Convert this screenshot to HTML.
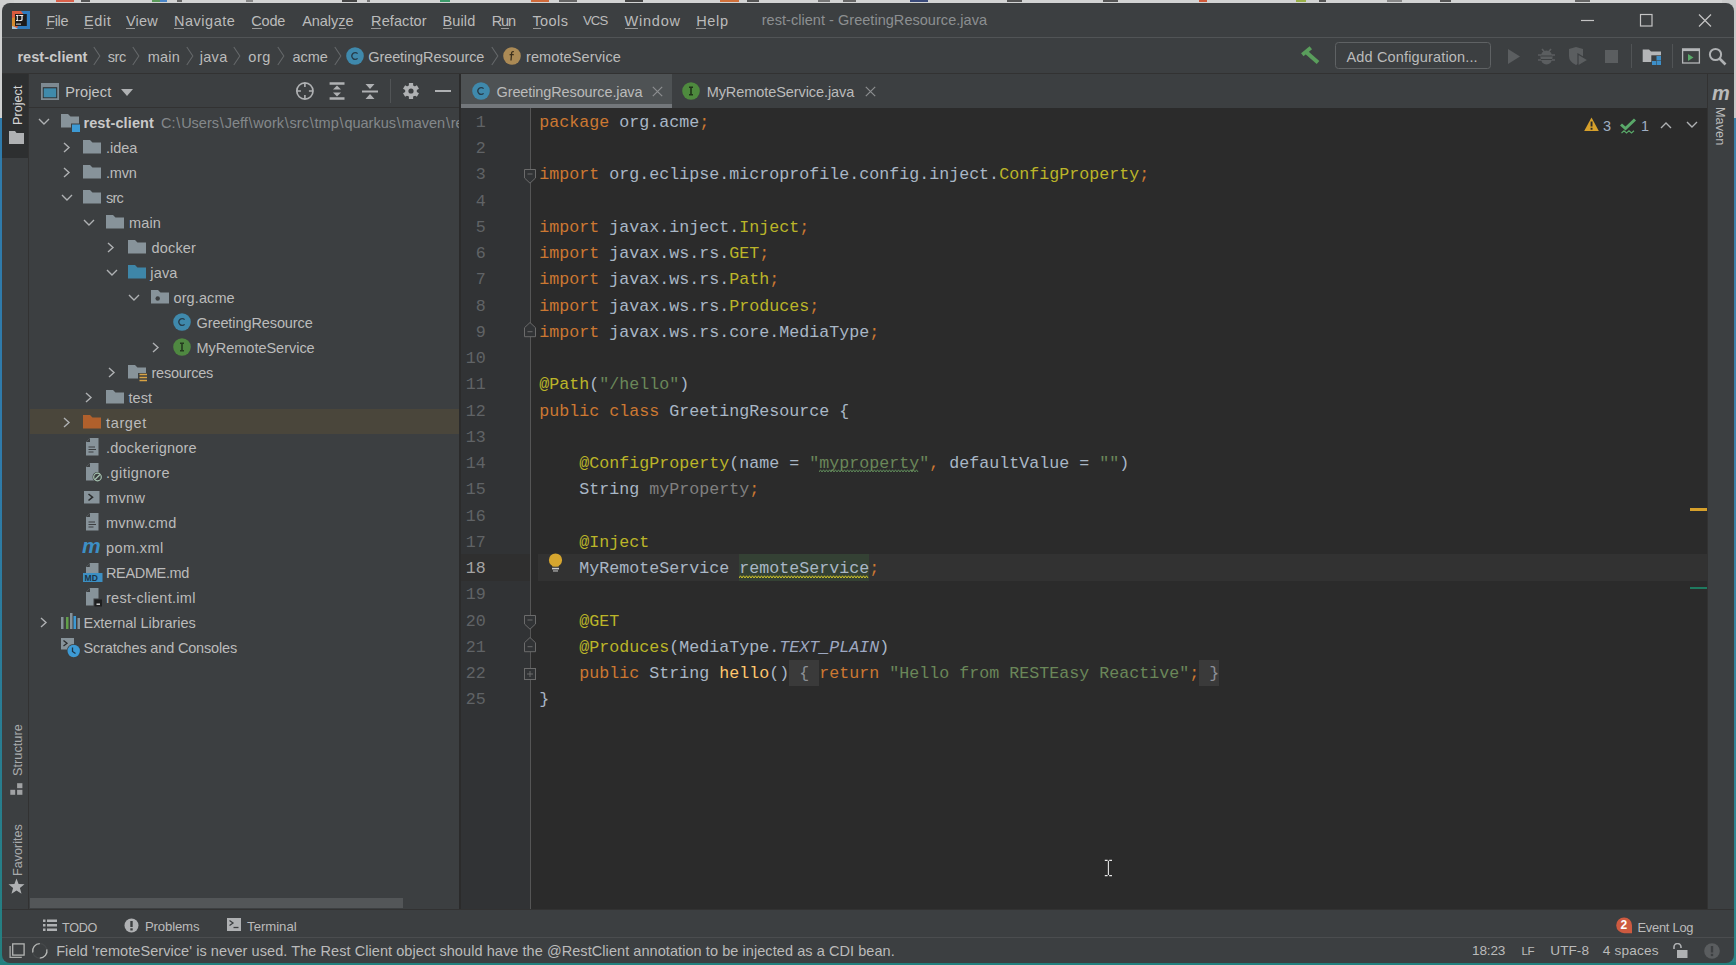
<!DOCTYPE html>
<html><head><meta charset="utf-8">
<style>
*{margin:0;padding:0;box-sizing:border-box}
html,body{width:1736px;height:965px;overflow:hidden;background:#2c7f88}
body{position:relative;font-family:"Liberation Sans",sans-serif;color:#bbbbbb}
.t{position:absolute;white-space:pre}
.r{position:absolute;display:block}
.u{text-decoration:underline;text-underline-offset:2px}
</style></head><body>
<div class="r" style="left:0px;top:0px;width:1736px;height:3px;background:#d2d3d3;"></div><div class="r" style="left:0px;top:0px;width:3px;height:118px;background:#cfd0d0;"></div><div class="r" style="left:0px;top:118px;width:3px;height:847px;background:#2f7bab;background:linear-gradient(#2f7bab,#2f7bab 40%,#24807f);"></div><div class="r" style="left:1733px;top:0px;width:3px;height:118px;background:#c9caca;"></div><div class="r" style="left:1733px;top:118px;width:3px;height:847px;background:#3d80a8;background:linear-gradient(#3d80a8,#3d80a8 40%,#2b8587);"></div><div class="r" style="left:0px;top:962px;width:1736px;height:3px;background:#22807e;"></div><div class="r" style="left:56px;top:0px;width:18px;height:2px;background:#d9604a;"></div><div class="r" style="left:81px;top:0px;width:9px;height:2px;background:#555555;"></div><div class="r" style="left:152px;top:0px;width:8px;height:2px;background:#5a9a5a;"></div><div class="r" style="left:160px;top:0px;width:7px;height:2px;background:#4a86c8;"></div><div class="r" style="left:177px;top:0px;width:5px;height:2px;background:#666666;"></div><div class="r" style="left:246px;top:0px;width:7px;height:2px;background:#888888;"></div><div class="r" style="left:342px;top:0px;width:15px;height:2px;background:#444444;"></div><div class="r" style="left:367px;top:0px;width:3px;height:2px;background:#777777;"></div><div class="r" style="left:440px;top:0px;width:10px;height:2px;background:#3c9a6a;"></div><div class="r" style="left:531px;top:0px;width:18px;height:2px;background:#d06a3a;"></div><div class="r" style="left:559px;top:0px;width:18px;height:2px;background:#666666;"></div><div class="r" style="left:625px;top:0px;width:18px;height:2px;background:#444444;"></div><div class="r" style="left:720px;top:0px;width:19px;height:2px;background:#d0703a;"></div><div class="r" style="left:747px;top:0px;width:12px;height:2px;background:#555555;"></div><div class="r" style="left:818px;top:0px;width:12px;height:2px;background:#777777;"></div><div class="r" style="left:843px;top:0px;width:13px;height:2px;background:#666666;"></div><div class="r" style="left:910px;top:0px;width:18px;height:2px;background:#3a4a7a;"></div><div class="r" style="left:1007px;top:0px;width:15px;height:2px;background:#555555;"></div><div class="r" style="left:1103px;top:0px;width:15px;height:2px;background:#555555;"></div><div class="r" style="left:1199px;top:0px;width:8px;height:2px;background:#d05a3a;"></div><div class="r" style="left:1296px;top:0px;width:10px;height:2px;background:#9ab04a;"></div><div class="r" style="left:1319px;top:0px;width:7px;height:2px;background:#555555;"></div><div class="r" style="left:1387px;top:0px;width:15px;height:2px;background:#888888;"></div><div class="r" style="left:1440px;top:0px;width:11px;height:2px;background:#555555;"></div><div class="r" style="left:1575px;top:0px;width:15px;height:2px;background:#666666;"></div><div class="r" style="left:0px;top:0px;width:14px;height:16px;background:#cfd0d0;"></div><div class="r" style="left:1722px;top:0px;width:14px;height:16px;background:#c9caca;"></div><div class="r" style="left:2px;top:3px;width:1732px;height:960px;background:#3c3f41;border-radius:8px;"></div><div class="r" style="left:2px;top:37px;width:1732px;height:1px;background:#515456;"></div><div class="r" style="left:2px;top:73px;width:1732px;height:1px;background:#323232;"></div><svg class="r" style="left:12px;top:11px;" width="18" height="18" viewBox="0 0 18 18"><rect x="0" y="0" width="18" height="18" fill="#2f7bbe"/><path d="M0 0 H9 L12 4 L5 17 L0 18 Z" fill="#da5b3e"/><path d="M0 7 L4.5 6 L4 15 L0 16 Z" fill="#d48a2e"/><path d="M0 15 L3 16 L6 18 H0 Z" fill="#a9c4d8"/><rect x="3" y="3" width="11.8" height="12" fill="#1c1b1b"/><path d="M4 4 H6.6 V4.9 H5.8 V9.1 H6.6 V10 H4 V9.1 H4.8 V4.9 H4 Z" fill="#f0f0f0"/><path d="M7.2 4 H11.2 V4.9 H10.6 V8.4 Q10.6 10 8.8 10 H7.2 V9 H8.6 Q9.4 9 9.4 8.2 V4.9 H7.2 Z" fill="#f0f0f0"/><rect x="4" y="12.4" width="5" height="1.5" fill="#9a9a9a"/></svg><div class="t" style="left:46.20px;top:10.97px;font-size:14.5px;line-height:20px;color:#bbbbbb;letter-spacing:-0.348px;">File</div><div class="r" style="left:46px;top:28px;width:8px;height:1px;background:#9a9a9a;"></div><div class="t" style="left:84.10px;top:10.97px;font-size:14.5px;line-height:20px;color:#bbbbbb;letter-spacing:0.563px;">Edit</div><div class="r" style="left:84px;top:28px;width:9px;height:1px;background:#9a9a9a;"></div><div class="t" style="left:125.90px;top:10.97px;font-size:14.5px;line-height:20px;color:#bbbbbb;letter-spacing:0.242px;">View</div><div class="r" style="left:126px;top:28px;width:9px;height:1px;background:#9a9a9a;"></div><div class="t" style="left:173.90px;top:10.97px;font-size:14.5px;line-height:20px;color:#bbbbbb;letter-spacing:0.542px;">Navigate</div><div class="r" style="left:174px;top:28px;width:10px;height:1px;background:#9a9a9a;"></div><div class="t" style="left:251.20px;top:10.97px;font-size:14.5px;line-height:20px;color:#bbbbbb;letter-spacing:-0.152px;">Code</div><div class="r" style="left:252px;top:28px;width:10px;height:1px;background:#9a9a9a;"></div><div class="t" style="left:302.20px;top:10.97px;font-size:14.5px;line-height:20px;color:#bbbbbb;letter-spacing:-0.053px;">Analyze</div><div class="r" style="left:339px;top:28px;width:7px;height:1px;background:#9a9a9a;"></div><div class="t" style="left:371.10px;top:10.97px;font-size:14.5px;line-height:20px;color:#bbbbbb;letter-spacing:0.099px;">Refactor</div><div class="r" style="left:371px;top:28px;width:10px;height:1px;background:#9a9a9a;"></div><div class="t" style="left:442.40px;top:10.97px;font-size:14.5px;line-height:20px;color:#bbbbbb;letter-spacing:0.159px;">Build</div><div class="r" style="left:443px;top:28px;width:9px;height:1px;background:#9a9a9a;"></div><div class="t" style="left:491.70px;top:10.97px;font-size:14.5px;line-height:20px;color:#bbbbbb;letter-spacing:-1.154px;">Run</div><div class="r" style="left:501px;top:28px;width:8px;height:1px;background:#9a9a9a;"></div><div class="t" style="left:532.40px;top:10.97px;font-size:14.5px;line-height:20px;color:#bbbbbb;letter-spacing:0.411px;">Tools</div><div class="r" style="left:533px;top:28px;width:8px;height:1px;background:#9a9a9a;"></div><div class="t" style="left:582.90px;top:11.42px;font-size:13.2px;line-height:20px;color:#bbbbbb;letter-spacing:-0.863px;">VCS</div><div class="t" style="left:624.40px;top:10.97px;font-size:14.5px;line-height:20px;color:#bbbbbb;letter-spacing:0.816px;">Window</div><div class="r" style="left:625px;top:28px;width:13px;height:1px;background:#9a9a9a;"></div><div class="t" style="left:696.20px;top:10.97px;font-size:14.5px;line-height:20px;color:#bbbbbb;letter-spacing:0.667px;">Help</div><div class="r" style="left:696px;top:28px;width:10px;height:1px;background:#9a9a9a;"></div><div class="t" style="left:761.70px;top:10.47px;font-size:14.5px;line-height:20px;color:#8c8f91;letter-spacing:0.038px;">rest-client - GreetingResource.java</div><svg class="r" style="left:1578px;top:12px;" width="140" height="18" viewBox="0 0 140 18"><path d="M3 8.5 H16" stroke="#c4c4c4" stroke-width="1.2"/>
<rect x="62.5" y="2.5" width="11.5" height="11.5" fill="none" stroke="#c4c4c4" stroke-width="1.2"/>
<path d="M121 2.5 L133 14.5 M133 2.5 L121 14.5" stroke="#c4c4c4" stroke-width="1.2"/></svg><div class="t" style="left:17.40px;top:46.97px;font-size:14.5px;line-height:20px;color:#c9c9c9;font-weight:bold;letter-spacing:0.069px;">rest-client</div><svg class="r" style="left:93px;top:46px;" width="8" height="20" viewBox="0 0 8 20"><path d="M0.8 1 L6.8 10 L0.8 19" stroke="#646769" stroke-width="1.1" fill="none"/></svg><svg class="r" style="left:132px;top:46px;" width="8" height="20" viewBox="0 0 8 20"><path d="M0.8 1 L6.8 10 L0.8 19" stroke="#646769" stroke-width="1.1" fill="none"/></svg><svg class="r" style="left:186px;top:46px;" width="8" height="20" viewBox="0 0 8 20"><path d="M0.8 1 L6.8 10 L0.8 19" stroke="#646769" stroke-width="1.1" fill="none"/></svg><svg class="r" style="left:233px;top:46px;" width="8" height="20" viewBox="0 0 8 20"><path d="M0.8 1 L6.8 10 L0.8 19" stroke="#646769" stroke-width="1.1" fill="none"/></svg><svg class="r" style="left:277px;top:46px;" width="8" height="20" viewBox="0 0 8 20"><path d="M0.8 1 L6.8 10 L0.8 19" stroke="#646769" stroke-width="1.1" fill="none"/></svg><svg class="r" style="left:334px;top:46px;" width="8" height="20" viewBox="0 0 8 20"><path d="M0.8 1 L6.8 10 L0.8 19" stroke="#646769" stroke-width="1.1" fill="none"/></svg><svg class="r" style="left:491px;top:46px;" width="8" height="20" viewBox="0 0 8 20"><path d="M0.8 1 L6.8 10 L0.8 19" stroke="#646769" stroke-width="1.1" fill="none"/></svg><div class="t" style="left:107.80px;top:46.97px;font-size:14.5px;line-height:20px;color:#bbbbbb;letter-spacing:-0.479px;">src</div><div class="t" style="left:147.70px;top:46.97px;font-size:14.5px;line-height:20px;color:#bbbbbb;letter-spacing:0.212px;">main</div><div class="t" style="left:199.76px;top:46.97px;font-size:14.5px;line-height:20px;color:#bbbbbb;letter-spacing:0.286px;">java</div><div class="t" style="left:248.20px;top:46.97px;font-size:14.5px;line-height:20px;color:#bbbbbb;letter-spacing:0.624px;">org</div><div class="t" style="left:292.60px;top:46.97px;font-size:14.5px;line-height:20px;color:#bbbbbb;letter-spacing:-0.118px;">acme</div><svg class="r" style="left:345px;top:46px" width="20" height="20" viewBox="0 0 20 20"><circle cx="10" cy="10" r="8.8" fill="#3f89ac"/><path d="M12.6 7.6 A3.3 3.4 0 1 0 12.6 12.4" stroke="#263c4a" stroke-width="1.35" fill="none"/></svg><div class="t" style="left:368.30px;top:46.97px;font-size:14.5px;line-height:20px;color:#bbbbbb;letter-spacing:-0.105px;">GreetingResource</div><svg class="r" style="left:502px;top:46px" width="20" height="20" viewBox="0 0 20 20"><circle cx="10" cy="10" r="8.8" fill="#ab8a55"/><path d="M11.8 5.6 Q10 5.2 9.6 7 L9 14.5 M7.6 8.6 H11.8" stroke="#3b2f1c" stroke-width="1.3" fill="none"/></svg><div class="t" style="left:526.00px;top:46.97px;font-size:14.5px;line-height:20px;color:#bbbbbb;letter-spacing:0.112px;">remoteService</div><svg class="r" style="left:1296px;top:42px;" width="26" height="24" viewBox="0 0 26 24"><path d="M6.3 12.8 L14.8 5.8" stroke="#5a9e5c" stroke-width="3.8"/><path d="M10 10 L22 20.6" stroke="#5a9e5c" stroke-width="4"/></svg><div class="r" style="left:1335px;top:42px;width:156px;height:27px;background:transparent;border:1.4px solid #5f6264;border-radius:3.5px;"></div><div class="t" style="left:1346.50px;top:47.47px;font-size:14.5px;line-height:20px;color:#bbbbbb;letter-spacing:0.154px;">Add Configuration...</div><svg class="r" style="left:1506px;top:48px;" width="16" height="17" viewBox="0 0 16 17"><path d="M2 1 L14 8.5 L2 16 Z" fill="#5b5e60"/></svg><svg class="r" style="left:1537px;top:46px;" width="19" height="20" viewBox="0 0 19 20"><ellipse cx="9.5" cy="11.5" rx="6" ry="7" fill="#5b5e60"/><path d="M5 3 L7.5 6 M14 3 L11.5 6 M1 9 H4 M15 9 H18 M1 14 H4 M15 14 H18" stroke="#5b5e60" stroke-width="1.6"/><path d="M4 10 H15 M4 13.5 H15" stroke="#3c3f41" stroke-width="1.2"/></svg><svg class="r" style="left:1567px;top:46px;" width="23" height="21" viewBox="0 0 23 21"><path d="M2 3 L9 1 L16 3 V10 Q16 16 9 19 Q2 16 2 10 Z" fill="#5b5e60"/><path d="M11 8 L21 14 L11 20 Z" fill="#5b5e60" stroke="#3c3f41" stroke-width="1.2"/></svg><div class="r" style="left:1605px;top:50px;width:13px;height:13px;background:#5b5e60;"></div><div class="r" style="left:1631px;top:44px;width:1px;height:24px;background:#515456;"></div><svg class="r" style="left:1642px;top:47px;" width="21" height="19" viewBox="0 0 21 19"><path d="M0.7 2.5 H7 L9 4.5 H19 V15 H0.7 Z" fill="#b4b6b8"/><rect x="9.3" y="8.3" width="10.4" height="10.4" fill="#3c3f41"/><rect x="14.5" y="9" width="4.5" height="4.5" fill="#3d8fc8"/><rect x="10" y="14" width="4" height="4" fill="#3d8fc8"/><rect x="14.5" y="14" width="4.5" height="4" fill="#3d8fc8"/></svg><div class="r" style="left:1672px;top:44px;width:1px;height:24px;background:#515456;"></div><svg class="r" style="left:1681px;top:48px;" width="20" height="16" viewBox="0 0 20 16"><rect x="1.6" y="1.1" width="16.8" height="13.9" fill="none" stroke="#b4b6b8" stroke-width="1.3"/><rect x="1" y="0.5" width="18" height="2.6" fill="#b4b6b8"/><path d="M7 6 L12.5 9.5 L7 13 Z" fill="#59a869"/></svg><svg class="r" style="left:1708px;top:47px;" width="21" height="20" viewBox="0 0 21 20"><circle cx="7.5" cy="7.5" r="5.6" fill="none" stroke="#afb1b3" stroke-width="2"/><path d="M11.5 11.5 L17.5 17.5" stroke="#afb1b3" stroke-width="2.6"/></svg><div class="r" style="left:2px;top:74px;width:27px;height:835px;background:#3c3f41;"></div><div class="r" style="left:28px;top:74px;width:1px;height:835px;background:#323232;"></div><div class="r" style="left:2px;top:74px;width:26px;height:84px;background:#2d2f30;"></div><div class="t" style="left:8px;top:125px;font-size:12.7px;line-height:20px;color:#d6d6d6;transform-origin:0 0;transform:rotate(-90deg);">Project</div><svg class="r" style="left:9px;top:131px;" width="15" height="13" viewBox="0 0 15 13"><path d="M0 0 H6 L7.5 2 H15 V13 H0 Z" fill="#afb1b3"/></svg><div class="t" style="left:8px;top:776px;font-size:12.77px;line-height:20px;color:#a9abad;transform-origin:0 0;transform:rotate(-90deg);">Structure</div><svg class="r" style="left:10px;top:783px;" width="13" height="12" viewBox="0 0 13 12"><rect x="0.3" y="6.8" width="4.9" height="5" fill="#a0a2a4"/><rect x="7.1" y="0.2" width="5.3" height="5" fill="#a0a2a4"/><rect x="7.1" y="6.8" width="5.3" height="5" fill="#a0a2a4"/></svg><div class="t" style="left:8px;top:875.5px;font-size:12.6px;line-height:20px;color:#a9abad;transform-origin:0 0;transform:rotate(-90deg);">Favorites</div><svg class="r" style="left:8px;top:878px;" width="17" height="17" viewBox="0 0 17 17"><path d="M8.5 0.5 L10.6 6 L16.5 6.2 L11.9 9.9 L13.5 15.8 L8.5 12.4 L3.5 15.8 L5.1 9.9 L0.5 6.2 L6.4 6 Z" fill="#afb1b3"/></svg><div class="r" style="left:459px;top:74px;width:2px;height:835px;background:#2b2b2b;"></div><div class="r" style="left:29px;top:107px;width:430px;height:1px;background:#323232;"></div><svg class="r" style="left:41px;top:83px;" width="18" height="17" viewBox="0 0 18 17"><rect x="0" y="0" width="18" height="17" fill="#7e8a92"/><rect x="1.8" y="4.2" width="14.4" height="11" fill="#2e3133"/><rect x="2.7" y="5.3" width="12.5" height="9" fill="#3f8aab"/></svg><div class="t" style="left:65.20px;top:81.97px;font-size:14.5px;line-height:20px;color:#c4c4c4;letter-spacing:0.151px;">Project</div><svg class="r" style="left:121px;top:89px;" width="12" height="7" viewBox="0 0 12 7"><path d="M0 0 H12 L6 7 Z" fill="#afb1b3"/></svg><svg class="r" style="left:295px;top:81px;" width="20" height="20" viewBox="0 0 20 20"><circle cx="9.9" cy="10" r="8.1" fill="none" stroke="#afb1b3" stroke-width="1.7"/><path d="M9.9 2 V6 M9.9 14 V18 M1.9 10 H5.9 M13.9 10 H17.9" stroke="#afb1b3" stroke-width="1.6"/></svg><svg class="r" style="left:328px;top:81px;" width="18" height="21" viewBox="0 0 18 21"><path d="M1.6 2.5 H16.5 M1.6 17.5 H16.5" stroke="#afb1b3" stroke-width="2.4"/><path d="M9 4.6 L13 8.6 H5 Z M9 15.4 L13 11.4 H5 Z" fill="#afb1b3"/></svg><svg class="r" style="left:361px;top:81px;" width="18" height="21" viewBox="0 0 18 21"><path d="M1 10.5 H17" stroke="#afb1b3" stroke-width="2"/><path d="M9 8 L4.5 3 H13.5 Z M9 13 L4.5 18 H13.5 Z" fill="#afb1b3"/></svg><div class="r" style="left:390px;top:79px;width:1px;height:24px;background:#515456;"></div><svg class="r" style="left:402px;top:82px;" width="18" height="18" viewBox="0 0 18 18"><g transform="translate(9 9)"><rect x="-2.1" y="-8" width="4.2" height="4" fill="#afb1b3" transform="rotate(0)"/><rect x="-2.1" y="-8" width="4.2" height="4" fill="#afb1b3" transform="rotate(60)"/><rect x="-2.1" y="-8" width="4.2" height="4" fill="#afb1b3" transform="rotate(120)"/><rect x="-2.1" y="-8" width="4.2" height="4" fill="#afb1b3" transform="rotate(180)"/><rect x="-2.1" y="-8" width="4.2" height="4" fill="#afb1b3" transform="rotate(240)"/><rect x="-2.1" y="-8" width="4.2" height="4" fill="#afb1b3" transform="rotate(300)"/><circle r="5.9" fill="#afb1b3"/><circle r="2.6" fill="#3c3f41"/></g></svg><div class="r" style="left:435px;top:90px;width:16px;height:2px;background:#afb1b3;"></div><div class="r" style="left:30px;top:409px;width:429px;height:25px;background:#4a463b;"></div><svg class="r" style="left:38px;top:117.5px;" width="12" height="8" viewBox="0 0 12 8"><path d="M1 1 L6 6 L11 1" stroke="#afb1b3" stroke-width="1.4" fill="none"/></svg><svg class="r" style="left:61px;top:114px;" width="20" height="19" viewBox="0 0 20 19"><path d="M0 0 H7 L9.5 2.5 H18 V13.5 H0 Z" fill="#87939a"/><rect x="10.5" y="10" width="9" height="8.5" fill="#3d9ad4" stroke="#3c3f41" stroke-width="1"/></svg><div class="t" style="left:83.40px;top:112.97px;font-size:14.5px;line-height:20px;color:#c9c9c9;font-weight:bold;letter-spacing:0.119px;">rest-client</div><div class="t" style="left:161.00px;top:112.97px;font-size:14.5px;line-height:20px;color:#84888b;">C:<span style="padding:0 0.8px">\</span>Users<span style="padding:0 0.8px">\</span>Jeff<span style="padding:0 0.8px">\</span>work<span style="padding:0 0.8px">\</span>src<span style="padding:0 0.8px">\</span>tmp<span style="padding:0 0.8px">\</span>quarkus<span style="padding:0 0.8px">\</span>maven<span style="padding:0 0.8px">\</span>rest-client</div><div class="r" style="left:459px;top:108px;width:2px;height:801px;background:#2b2b2b;"></div><svg class="r" style="left:63px;top:141.5px;" width="8" height="11" viewBox="0 0 8 11"><path d="M1 1 L6 5.5 L1 10" stroke="#afb1b3" stroke-width="1.4" fill="none"/></svg><svg class="r" style="left:83px;top:140px;" width="19" height="14" viewBox="0 0 19 14"><path d="M0 0 H7 L9.5 2.5 H18 V13.5 H0 Z" fill="#87939a"/></svg><div class="t" style="left:106.00px;top:137.97px;font-size:14.5px;line-height:20px;color:#bbbbbb;letter-spacing:-0.041px;">.idea</div><svg class="r" style="left:63px;top:166.5px;" width="8" height="11" viewBox="0 0 8 11"><path d="M1 1 L6 5.5 L1 10" stroke="#afb1b3" stroke-width="1.4" fill="none"/></svg><svg class="r" style="left:83px;top:165px;" width="19" height="14" viewBox="0 0 19 14"><path d="M0 0 H7 L9.5 2.5 H18 V13.5 H0 Z" fill="#87939a"/></svg><div class="t" style="left:106.00px;top:162.97px;font-size:14.5px;line-height:20px;color:#bbbbbb;letter-spacing:-0.197px;">.mvn</div><svg class="r" style="left:61px;top:193.5px;" width="12" height="8" viewBox="0 0 12 8"><path d="M1 1 L6 6 L11 1" stroke="#afb1b3" stroke-width="1.4" fill="none"/></svg><svg class="r" style="left:83px;top:190px;" width="19" height="14" viewBox="0 0 19 14"><path d="M0 0 H7 L9.5 2.5 H18 V13.5 H0 Z" fill="#87939a"/></svg><div class="t" style="left:106.00px;top:187.97px;font-size:14.5px;line-height:20px;color:#bbbbbb;letter-spacing:-0.779px;">src</div><svg class="r" style="left:83px;top:218.5px;" width="12" height="8" viewBox="0 0 12 8"><path d="M1 1 L6 6 L11 1" stroke="#afb1b3" stroke-width="1.4" fill="none"/></svg><svg class="r" style="left:106px;top:215px;" width="19" height="14" viewBox="0 0 19 14"><path d="M0 0 H7 L9.5 2.5 H18 V13.5 H0 Z" fill="#87939a"/></svg><div class="t" style="left:129.00px;top:212.97px;font-size:14.5px;line-height:20px;color:#bbbbbb;letter-spacing:0.145px;">main</div><svg class="r" style="left:107px;top:241.5px;" width="8" height="11" viewBox="0 0 8 11"><path d="M1 1 L6 5.5 L1 10" stroke="#afb1b3" stroke-width="1.4" fill="none"/></svg><svg class="r" style="left:128px;top:240px;" width="19" height="14" viewBox="0 0 19 14"><path d="M0 0 H7 L9.5 2.5 H18 V13.5 H0 Z" fill="#87939a"/></svg><div class="t" style="left:151.50px;top:237.97px;font-size:14.5px;line-height:20px;color:#bbbbbb;letter-spacing:0.180px;">docker</div><svg class="r" style="left:106px;top:268.5px;" width="12" height="8" viewBox="0 0 12 8"><path d="M1 1 L6 6 L11 1" stroke="#afb1b3" stroke-width="1.4" fill="none"/></svg><svg class="r" style="left:128px;top:265px;" width="19" height="14" viewBox="0 0 19 14"><path d="M0 0 H7 L9.5 2.5 H18 V13.5 H0 Z" fill="#3e86a8"/></svg><div class="t" style="left:150.36px;top:262.97px;font-size:14.5px;line-height:20px;color:#bbbbbb;letter-spacing:0.152px;">java</div><svg class="r" style="left:128px;top:293.5px;" width="12" height="8" viewBox="0 0 12 8"><path d="M1 1 L6 6 L11 1" stroke="#afb1b3" stroke-width="1.4" fill="none"/></svg><svg class="r" style="left:151px;top:290px;" width="19" height="14" viewBox="0 0 19 14"><path d="M0 0 H7 L9.5 2.5 H18 V13.5 H0 Z" fill="#87939a"/><circle cx="6.7" cy="8.5" r="2.2" fill="#3c3f41"/></svg><div class="t" style="left:173.50px;top:287.97px;font-size:14.5px;line-height:20px;color:#bbbbbb;letter-spacing:0.105px;">org.acme</div><svg class="r" style="left:171.7px;top:312px" width="20" height="20" viewBox="0 0 20 20"><circle cx="10" cy="10" r="8.8" fill="#3f89ac"/><path d="M12.6 7.6 A3.3 3.4 0 1 0 12.6 12.4" stroke="#263c4a" stroke-width="1.35" fill="none"/></svg><div class="t" style="left:196.50px;top:312.97px;font-size:14.5px;line-height:20px;color:#bbbbbb;letter-spacing:-0.091px;">GreetingResource</div><svg class="r" style="left:152px;top:341.5px;" width="8" height="11" viewBox="0 0 8 11"><path d="M1 1 L6 5.5 L1 10" stroke="#afb1b3" stroke-width="1.4" fill="none"/></svg><svg class="r" style="left:171.7px;top:337px" width="20" height="20" viewBox="0 0 20 20"><circle cx="10" cy="10" r="8.8" fill="#4f8841"/><path d="M8 6.2 H12 M8 13.8 H12 M10 6.2 V13.8" stroke="#243a1f" stroke-width="1.6" fill="none"/></svg><div class="t" style="left:196.50px;top:337.97px;font-size:14.5px;line-height:20px;color:#bbbbbb;letter-spacing:-0.019px;">MyRemoteService</div><svg class="r" style="left:108px;top:366.5px;" width="8" height="11" viewBox="0 0 8 11"><path d="M1 1 L6 5.5 L1 10" stroke="#afb1b3" stroke-width="1.4" fill="none"/></svg><svg class="r" style="left:128px;top:365px;" width="20" height="17" viewBox="0 0 20 17"><path d="M0 0 H7 L9.5 2.5 H18 V13.5 H0 Z" fill="#87939a"/><rect x="10" y="8" width="10" height="9" fill="#3c3f41"/><path d="M11.5 9.5 H19 M11.5 12.5 H19 M11.5 15.5 H19" stroke="#d9a343" stroke-width="1.6"/></svg><div class="t" style="left:151.50px;top:362.97px;font-size:14.5px;line-height:20px;color:#bbbbbb;letter-spacing:-0.244px;">resources</div><svg class="r" style="left:85px;top:391.5px;" width="8" height="11" viewBox="0 0 8 11"><path d="M1 1 L6 5.5 L1 10" stroke="#afb1b3" stroke-width="1.4" fill="none"/></svg><svg class="r" style="left:106px;top:390px;" width="19" height="14" viewBox="0 0 19 14"><path d="M0 0 H7 L9.5 2.5 H18 V13.5 H0 Z" fill="#87939a"/></svg><div class="t" style="left:128.50px;top:387.97px;font-size:14.5px;line-height:20px;color:#bbbbbb;letter-spacing:0.018px;">test</div><svg class="r" style="left:63px;top:416.5px;" width="8" height="11" viewBox="0 0 8 11"><path d="M1 1 L6 5.5 L1 10" stroke="#afb1b3" stroke-width="1.4" fill="none"/></svg><svg class="r" style="left:83px;top:415px;" width="19" height="14" viewBox="0 0 19 14"><path d="M0 0 H7 L9.5 2.5 H18 V13.5 H0 Z" fill="#b0602c"/></svg><div class="t" style="left:106.00px;top:412.97px;font-size:14.5px;line-height:20px;color:#bbbbbb;letter-spacing:0.651px;">target</div><svg class="r" style="left:86px;top:438px;" width="13" height="18" viewBox="0 0 13 18"><path d="M4 0 H12.5 V17.5 H0 V4 Z" fill="#87939a"/><path d="M0 4 L4 0 V4 Z" fill="#3c3f41"/><path d="M2.5 9 H9 M2.5 11.5 H10 M2.5 14 H7.5" stroke="#3c3f41" stroke-width="1.1"/></svg><div class="t" style="left:106.00px;top:437.97px;font-size:14.5px;line-height:20px;color:#bbbbbb;letter-spacing:0.236px;">.dockerignore</div><svg class="r" style="left:86px;top:463px;" width="17" height="20" viewBox="0 0 17 20"><path d="M4 0 H12.5 V17.5 H0 V4 Z" fill="#87939a"/><path d="M0 4 L4 0 V4 Z" fill="#3c3f41"/><circle cx="11.5" cy="14" r="5" fill="#3c3f41"/><circle cx="11.5" cy="14" r="3.8" fill="none" stroke="#a6c3b0" stroke-width="1.2"/><path d="M9 16.5 L14 11.5" stroke="#a6c3b0" stroke-width="1.2"/></svg><div class="t" style="left:106.00px;top:462.97px;font-size:14.5px;line-height:20px;color:#bbbbbb;letter-spacing:0.448px;">.gitignore</div><svg class="r" style="left:84px;top:490.5px;" width="16" height="13" viewBox="0 0 16 13"><rect x="0" y="0" width="15.5" height="12.5" fill="#87939a"/><path d="M4.5 3 L8.5 6.2 L4.5 9.5" stroke="#2b2d2e" stroke-width="1.6" fill="none"/></svg><div class="t" style="left:106.00px;top:487.97px;font-size:14.5px;line-height:20px;color:#bbbbbb;letter-spacing:0.328px;">mvnw</div><svg class="r" style="left:86px;top:513px;" width="13" height="18" viewBox="0 0 13 18"><path d="M4 0 H12.5 V17.5 H0 V4 Z" fill="#87939a"/><path d="M0 4 L4 0 V4 Z" fill="#3c3f41"/><path d="M2.5 9 H9 M2.5 11.5 H10 M2.5 14 H7.5" stroke="#3c3f41" stroke-width="1.1"/></svg><div class="t" style="left:106.00px;top:512.97px;font-size:14.5px;line-height:20px;color:#bbbbbb;letter-spacing:0.255px;">mvnw.cmd</div><div class="t" style="left:82px;top:534px;font-size:21px;line-height:24px;font-weight:bold;font-style:italic;color:#3d8fc5;letter-spacing:-1px">m</div><div class="t" style="left:106.00px;top:537.97px;font-size:14.5px;line-height:20px;color:#bbbbbb;letter-spacing:0.398px;">pom.xml</div><svg class="r" style="left:83px;top:563px;" width="20" height="19" viewBox="0 0 20 19"><path d="M6.8 0 H15.5 V10 H3 V4 Z" fill="#87939a"/><path d="M3 4 L6.8 0 V4 Z" fill="#3c3f41"/><rect x="0" y="10" width="19.5" height="9" fill="#3c8fc3"/><text x="1.6" y="17.8" font-family="Liberation Sans" font-weight="bold" font-size="8.5" fill="#1d3447">MD</text></svg><div class="t" style="left:106.00px;top:562.97px;font-size:14.5px;line-height:20px;color:#bbbbbb;letter-spacing:-0.350px;">README.md</div><svg class="r" style="left:86px;top:588px;" width="17" height="19" viewBox="0 0 17 19"><path d="M4 0 H12.5 V17.5 H0 V4 Z" fill="#87939a"/><path d="M0 4 L4 0 V4 Z" fill="#3c3f41"/><rect x="8" y="11" width="8.5" height="8" fill="#1e1f20" stroke="#3c3f41" stroke-width="1"/><rect x="10.5" y="15.5" width="3.5" height="1.4" fill="#dcdcdc"/></svg><div class="t" style="left:106.00px;top:587.97px;font-size:14.5px;line-height:20px;color:#bbbbbb;letter-spacing:0.285px;">rest-client.iml</div><svg class="r" style="left:40px;top:616.5px;" width="8" height="11" viewBox="0 0 8 11"><path d="M1 1 L6 5.5 L1 10" stroke="#afb1b3" stroke-width="1.4" fill="none"/></svg><svg class="r" style="left:61px;top:613px;" width="19" height="16" viewBox="0 0 19 16"><rect x="0" y="4" width="2.5" height="12" fill="#87939a"/><rect x="5" y="4" width="2.5" height="12" fill="#62a04a"/><rect x="9" y="0" width="2.5" height="16" fill="#87939a"/><rect x="12.5" y="3" width="2.5" height="13" fill="#3d9ad4"/><rect x="16.5" y="5" width="2.5" height="11" fill="#87939a"/></svg><div class="t" style="left:83.50px;top:612.97px;font-size:14.5px;line-height:20px;color:#bbbbbb;letter-spacing:-0.030px;">External Libraries</div><svg class="r" style="left:61px;top:638px;" width="21" height="20" viewBox="0 0 21 20"><rect x="0" y="0" width="13" height="11.5" fill="#87939a"/><path d="M2.5 2.5 L6 5.3 L2.5 8" stroke="#2b2d2e" stroke-width="1.3" fill="none"/><circle cx="12.7" cy="13" r="7" fill="#3c3f41"/><circle cx="12.7" cy="13" r="6.2" fill="#3d9ad4"/><path d="M11.5 9.5 V13.5 L14.5 15.5" stroke="#1d3447" stroke-width="1.3" fill="none"/></svg><div class="t" style="left:83.50px;top:637.97px;font-size:14.5px;line-height:20px;color:#bbbbbb;letter-spacing:-0.166px;">Scratches and Consoles</div><div class="r" style="left:30px;top:898px;width:373px;height:10px;background:#535658;"></div><div class="r" style="left:461px;top:74px;width:1246px;height:34px;background:#3c3f41;"></div><div class="r" style="left:461px;top:74px;width:211px;height:30px;background:#4e5254;"></div><div class="r" style="left:461px;top:104px;width:211px;height:4px;background:#73777b;"></div><svg class="r" style="left:471px;top:81px" width="20" height="20" viewBox="0 0 20 20"><circle cx="10" cy="10" r="8.8" fill="#3f89ac"/><path d="M12.6 7.6 A3.3 3.4 0 1 0 12.6 12.4" stroke="#263c4a" stroke-width="1.35" fill="none"/></svg><div class="t" style="left:496.50px;top:81.97px;font-size:14.5px;line-height:20px;color:#bbbbbb;letter-spacing:-0.112px;">GreetingResource.java</div><svg class="r" style="left:652px;top:86px;" width="11" height="11" viewBox="0 0 11 11"><path d="M0.8 0.8 L10.2 10.2 M10.2 0.8 L0.8 10.2" stroke="#8c8e90" stroke-width="1.2"/></svg><svg class="r" style="left:681px;top:81px" width="20" height="20" viewBox="0 0 20 20"><circle cx="10" cy="10" r="8.8" fill="#4e8a3e"/><path d="M8 6.2 H12 M8 13.8 H12 M10 6.2 V13.8" stroke="#1f3318" stroke-width="1.6" fill="none"/></svg><div class="t" style="left:706.70px;top:81.97px;font-size:14.5px;line-height:20px;color:#bbbbbb;letter-spacing:-0.075px;">MyRemoteService.java</div><svg class="r" style="left:865px;top:86px;" width="11" height="11" viewBox="0 0 11 11"><path d="M0.8 0.8 L10.2 10.2 M10.2 0.8 L0.8 10.2" stroke="#8c8e90" stroke-width="1.2"/></svg><div class="r" style="left:461px;top:108px;width:70px;height:801px;background:#313335;"></div><div class="r" style="left:531px;top:108px;width:1177px;height:801px;background:#2b2b2b;"></div><div class="r" style="left:461px;top:909px;width:1247px;height:1px;background:#2b2b2b;"></div><div class="r" style="left:461px;top:554.25px;width:69px;height:26.25px;background:#2f2f2f"></div><div class="r" style="left:538px;top:554.25px;width:1169px;height:26.25px;background:#323232"></div><div class="r" style="left:530px;top:108px;width:1px;height:801px;background:#555555;"></div><div class="t" style="left:475.80px;top:109.87px;font-size:16.66px;line-height:26px;color:#606366;font-family:'Liberation Mono',monospace;">1</div><div class="t" style="left:539.30px;top:109.87px;font-size:16.66px;line-height:26px;color:#cc7832;font-family:'Liberation Mono',monospace;">package</div><div class="t" style="left:609.30px;top:109.87px;font-size:16.66px;line-height:26px;color:#a9b7c6;font-family:'Liberation Mono',monospace;"> org.acme</div><div class="t" style="left:699.30px;top:109.87px;font-size:16.66px;line-height:26px;color:#cc7832;font-family:'Liberation Mono',monospace;">;</div><div class="t" style="left:475.80px;top:136.12px;font-size:16.66px;line-height:26px;color:#606366;font-family:'Liberation Mono',monospace;">2</div><div class="t" style="left:475.80px;top:162.37px;font-size:16.66px;line-height:26px;color:#606366;font-family:'Liberation Mono',monospace;">3</div><div class="t" style="left:539.30px;top:162.37px;font-size:16.66px;line-height:26px;color:#cc7832;font-family:'Liberation Mono',monospace;">import</div><div class="t" style="left:599.30px;top:162.37px;font-size:16.66px;line-height:26px;color:#a9b7c6;font-family:'Liberation Mono',monospace;"> org.eclipse.microprofile.config.inject.</div><div class="t" style="left:999.30px;top:162.37px;font-size:16.66px;line-height:26px;color:#bbb529;font-family:'Liberation Mono',monospace;">ConfigProperty</div><div class="t" style="left:1139.30px;top:162.37px;font-size:16.66px;line-height:26px;color:#cc7832;font-family:'Liberation Mono',monospace;">;</div><div class="t" style="left:475.80px;top:188.62px;font-size:16.66px;line-height:26px;color:#606366;font-family:'Liberation Mono',monospace;">4</div><div class="t" style="left:475.80px;top:214.87px;font-size:16.66px;line-height:26px;color:#606366;font-family:'Liberation Mono',monospace;">5</div><div class="t" style="left:539.30px;top:214.87px;font-size:16.66px;line-height:26px;color:#cc7832;font-family:'Liberation Mono',monospace;">import</div><div class="t" style="left:599.30px;top:214.87px;font-size:16.66px;line-height:26px;color:#a9b7c6;font-family:'Liberation Mono',monospace;"> javax.inject.</div><div class="t" style="left:739.30px;top:214.87px;font-size:16.66px;line-height:26px;color:#bbb529;font-family:'Liberation Mono',monospace;">Inject</div><div class="t" style="left:799.30px;top:214.87px;font-size:16.66px;line-height:26px;color:#cc7832;font-family:'Liberation Mono',monospace;">;</div><div class="t" style="left:475.80px;top:241.12px;font-size:16.66px;line-height:26px;color:#606366;font-family:'Liberation Mono',monospace;">6</div><div class="t" style="left:539.30px;top:241.12px;font-size:16.66px;line-height:26px;color:#cc7832;font-family:'Liberation Mono',monospace;">import</div><div class="t" style="left:599.30px;top:241.12px;font-size:16.66px;line-height:26px;color:#a9b7c6;font-family:'Liberation Mono',monospace;"> javax.ws.rs.</div><div class="t" style="left:729.30px;top:241.12px;font-size:16.66px;line-height:26px;color:#bbb529;font-family:'Liberation Mono',monospace;">GET</div><div class="t" style="left:759.30px;top:241.12px;font-size:16.66px;line-height:26px;color:#cc7832;font-family:'Liberation Mono',monospace;">;</div><div class="t" style="left:475.80px;top:267.37px;font-size:16.66px;line-height:26px;color:#606366;font-family:'Liberation Mono',monospace;">7</div><div class="t" style="left:539.30px;top:267.37px;font-size:16.66px;line-height:26px;color:#cc7832;font-family:'Liberation Mono',monospace;">import</div><div class="t" style="left:599.30px;top:267.37px;font-size:16.66px;line-height:26px;color:#a9b7c6;font-family:'Liberation Mono',monospace;"> javax.ws.rs.</div><div class="t" style="left:729.30px;top:267.37px;font-size:16.66px;line-height:26px;color:#bbb529;font-family:'Liberation Mono',monospace;">Path</div><div class="t" style="left:769.30px;top:267.37px;font-size:16.66px;line-height:26px;color:#cc7832;font-family:'Liberation Mono',monospace;">;</div><div class="t" style="left:475.80px;top:293.62px;font-size:16.66px;line-height:26px;color:#606366;font-family:'Liberation Mono',monospace;">8</div><div class="t" style="left:539.30px;top:293.62px;font-size:16.66px;line-height:26px;color:#cc7832;font-family:'Liberation Mono',monospace;">import</div><div class="t" style="left:599.30px;top:293.62px;font-size:16.66px;line-height:26px;color:#a9b7c6;font-family:'Liberation Mono',monospace;"> javax.ws.rs.</div><div class="t" style="left:729.30px;top:293.62px;font-size:16.66px;line-height:26px;color:#bbb529;font-family:'Liberation Mono',monospace;">Produces</div><div class="t" style="left:809.30px;top:293.62px;font-size:16.66px;line-height:26px;color:#cc7832;font-family:'Liberation Mono',monospace;">;</div><div class="t" style="left:475.80px;top:319.87px;font-size:16.66px;line-height:26px;color:#606366;font-family:'Liberation Mono',monospace;">9</div><div class="t" style="left:539.30px;top:319.87px;font-size:16.66px;line-height:26px;color:#cc7832;font-family:'Liberation Mono',monospace;">import</div><div class="t" style="left:599.30px;top:319.87px;font-size:16.66px;line-height:26px;color:#a9b7c6;font-family:'Liberation Mono',monospace;"> javax.ws.rs.core.MediaType</div><div class="t" style="left:869.30px;top:319.87px;font-size:16.66px;line-height:26px;color:#cc7832;font-family:'Liberation Mono',monospace;">;</div><div class="t" style="left:465.80px;top:346.12px;font-size:16.66px;line-height:26px;color:#606366;font-family:'Liberation Mono',monospace;">10</div><div class="t" style="left:465.80px;top:372.37px;font-size:16.66px;line-height:26px;color:#606366;font-family:'Liberation Mono',monospace;">11</div><div class="t" style="left:539.30px;top:372.37px;font-size:16.66px;line-height:26px;color:#bbb529;font-family:'Liberation Mono',monospace;">@Path</div><div class="t" style="left:589.30px;top:372.37px;font-size:16.66px;line-height:26px;color:#a9b7c6;font-family:'Liberation Mono',monospace;">(</div><div class="t" style="left:599.30px;top:372.37px;font-size:16.66px;line-height:26px;color:#6a8759;font-family:'Liberation Mono',monospace;">"/hello"</div><div class="t" style="left:679.30px;top:372.37px;font-size:16.66px;line-height:26px;color:#a9b7c6;font-family:'Liberation Mono',monospace;">)</div><div class="t" style="left:465.80px;top:398.62px;font-size:16.66px;line-height:26px;color:#606366;font-family:'Liberation Mono',monospace;">12</div><div class="t" style="left:539.30px;top:398.62px;font-size:16.66px;line-height:26px;color:#cc7832;font-family:'Liberation Mono',monospace;">public class</div><div class="t" style="left:659.30px;top:398.62px;font-size:16.66px;line-height:26px;color:#a9b7c6;font-family:'Liberation Mono',monospace;"> GreetingResource {</div><div class="t" style="left:465.80px;top:424.87px;font-size:16.66px;line-height:26px;color:#606366;font-family:'Liberation Mono',monospace;">13</div><div class="t" style="left:465.80px;top:451.12px;font-size:16.66px;line-height:26px;color:#606366;font-family:'Liberation Mono',monospace;">14</div><div class="t" style="left:579.30px;top:451.12px;font-size:16.66px;line-height:26px;color:#bbb529;font-family:'Liberation Mono',monospace;">@ConfigProperty</div><div class="t" style="left:729.30px;top:451.12px;font-size:16.66px;line-height:26px;color:#a9b7c6;font-family:'Liberation Mono',monospace;">(name = </div><div class="t" style="left:809.30px;top:451.12px;font-size:16.66px;line-height:26px;color:#6a8759;font-family:'Liberation Mono',monospace;">"</div><svg class="r" style="left:819.3px;top:469.2px" width="100" height="4"><path d="M0.0 3L1.5 0.8L3.0 3L4.5 0.8L6.0 3L7.5 0.8L9.0 3L10.5 0.8L12.0 3L13.5 0.8L15.0 3L16.5 0.8L18.0 3L19.5 0.8L21.0 3L22.5 0.8L24.0 3L25.5 0.8L27.0 3L28.5 0.8L30.0 3L31.5 0.8L33.0 3L34.5 0.8L36.0 3L37.5 0.8L39.0 3L40.5 0.8L42.0 3L43.5 0.8L45.0 3L46.5 0.8L48.0 3L49.5 0.8L51.0 3L52.5 0.8L54.0 3L55.5 0.8L57.0 3L58.5 0.8L60.0 3L61.5 0.8L63.0 3L64.5 0.8L66.0 3L67.5 0.8L69.0 3L70.5 0.8L72.0 3L73.5 0.8L75.0 3L76.5 0.8L78.0 3L79.5 0.8L81.0 3L82.5 0.8L84.0 3L85.5 0.8L87.0 3L88.5 0.8L90.0 3L91.5 0.8L93.0 3L94.5 0.8L96.0 3L97.5 0.8L99.0 3" stroke="#5f8a5a" stroke-width="1" fill="none"/></svg><div class="t" style="left:819.30px;top:451.12px;font-size:16.66px;line-height:26px;color:#6a8759;font-family:'Liberation Mono',monospace;">myproperty</div><div class="t" style="left:919.30px;top:451.12px;font-size:16.66px;line-height:26px;color:#6a8759;font-family:'Liberation Mono',monospace;">"</div><div class="t" style="left:929.30px;top:451.12px;font-size:16.66px;line-height:26px;color:#cc7832;font-family:'Liberation Mono',monospace;">, </div><div class="t" style="left:949.30px;top:451.12px;font-size:16.66px;line-height:26px;color:#a9b7c6;font-family:'Liberation Mono',monospace;">defaultValue = </div><div class="t" style="left:1099.30px;top:451.12px;font-size:16.66px;line-height:26px;color:#6a8759;font-family:'Liberation Mono',monospace;">""</div><div class="t" style="left:1119.30px;top:451.12px;font-size:16.66px;line-height:26px;color:#a9b7c6;font-family:'Liberation Mono',monospace;">)</div><div class="t" style="left:465.80px;top:477.37px;font-size:16.66px;line-height:26px;color:#606366;font-family:'Liberation Mono',monospace;">15</div><div class="t" style="left:539.30px;top:477.37px;font-size:16.66px;line-height:26px;color:#a9b7c6;font-family:'Liberation Mono',monospace;">    String </div><div class="t" style="left:649.30px;top:477.37px;font-size:16.66px;line-height:26px;color:#808080;font-family:'Liberation Mono',monospace;">myProperty</div><div class="t" style="left:749.30px;top:477.37px;font-size:16.66px;line-height:26px;color:#cc7832;font-family:'Liberation Mono',monospace;">;</div><div class="t" style="left:465.80px;top:503.62px;font-size:16.66px;line-height:26px;color:#606366;font-family:'Liberation Mono',monospace;">16</div><div class="t" style="left:465.80px;top:529.87px;font-size:16.66px;line-height:26px;color:#606366;font-family:'Liberation Mono',monospace;">17</div><div class="t" style="left:579.30px;top:529.87px;font-size:16.66px;line-height:26px;color:#bbb529;font-family:'Liberation Mono',monospace;">@Inject</div><div class="t" style="left:465.80px;top:556.12px;font-size:16.66px;line-height:26px;color:#a4a3a3;font-family:'Liberation Mono',monospace;">18</div><div class="t" style="left:539.30px;top:556.12px;font-size:16.66px;line-height:26px;color:#a9b7c6;font-family:'Liberation Mono',monospace;">    MyRemoteService </div><div class="r" style="left:739.3px;top:554.25px;width:130px;height:26.25px;background:#344134"></div><svg class="r" style="left:739.3px;top:574.8px" width="130" height="4"><path d="M0.0 3L1.5 0.8L3.0 3L4.5 0.8L6.0 3L7.5 0.8L9.0 3L10.5 0.8L12.0 3L13.5 0.8L15.0 3L16.5 0.8L18.0 3L19.5 0.8L21.0 3L22.5 0.8L24.0 3L25.5 0.8L27.0 3L28.5 0.8L30.0 3L31.5 0.8L33.0 3L34.5 0.8L36.0 3L37.5 0.8L39.0 3L40.5 0.8L42.0 3L43.5 0.8L45.0 3L46.5 0.8L48.0 3L49.5 0.8L51.0 3L52.5 0.8L54.0 3L55.5 0.8L57.0 3L58.5 0.8L60.0 3L61.5 0.8L63.0 3L64.5 0.8L66.0 3L67.5 0.8L69.0 3L70.5 0.8L72.0 3L73.5 0.8L75.0 3L76.5 0.8L78.0 3L79.5 0.8L81.0 3L82.5 0.8L84.0 3L85.5 0.8L87.0 3L88.5 0.8L90.0 3L91.5 0.8L93.0 3L94.5 0.8L96.0 3L97.5 0.8L99.0 3L100.5 0.8L102.0 3L103.5 0.8L105.0 3L106.5 0.8L108.0 3L109.5 0.8L111.0 3L112.5 0.8L114.0 3L115.5 0.8L117.0 3L118.5 0.8L120.0 3L121.5 0.8L123.0 3L124.5 0.8L126.0 3L127.5 0.8L129.0 3" stroke="#d2c52a" stroke-width="1" fill="none"/></svg><div class="t" style="left:739.30px;top:556.12px;font-size:16.66px;line-height:26px;color:#a9b7c6;font-family:'Liberation Mono',monospace;">remoteService</div><div class="t" style="left:869.30px;top:556.12px;font-size:16.66px;line-height:26px;color:#cc7832;font-family:'Liberation Mono',monospace;">;</div><div class="t" style="left:465.80px;top:582.37px;font-size:16.66px;line-height:26px;color:#606366;font-family:'Liberation Mono',monospace;">19</div><div class="t" style="left:465.80px;top:608.62px;font-size:16.66px;line-height:26px;color:#606366;font-family:'Liberation Mono',monospace;">20</div><div class="t" style="left:579.30px;top:608.62px;font-size:16.66px;line-height:26px;color:#bbb529;font-family:'Liberation Mono',monospace;">@GET</div><div class="t" style="left:465.80px;top:634.87px;font-size:16.66px;line-height:26px;color:#606366;font-family:'Liberation Mono',monospace;">21</div><div class="t" style="left:579.30px;top:634.87px;font-size:16.66px;line-height:26px;color:#bbb529;font-family:'Liberation Mono',monospace;">@Produces</div><div class="t" style="left:669.30px;top:634.87px;font-size:16.66px;line-height:26px;color:#a9b7c6;font-family:'Liberation Mono',monospace;">(MediaType.</div><div class="t" style="left:779.30px;top:634.87px;font-size:16.66px;line-height:26px;color:#9ea8c2;font-family:'Liberation Mono',monospace;font-style:italic;">TEXT_PLAIN</div><div class="t" style="left:879.30px;top:634.87px;font-size:16.66px;line-height:26px;color:#a9b7c6;font-family:'Liberation Mono',monospace;">)</div><div class="t" style="left:465.80px;top:661.12px;font-size:16.66px;line-height:26px;color:#606366;font-family:'Liberation Mono',monospace;">22</div><div class="t" style="left:579.30px;top:661.12px;font-size:16.66px;line-height:26px;color:#cc7832;font-family:'Liberation Mono',monospace;">public</div><div class="t" style="left:639.30px;top:661.12px;font-size:16.66px;line-height:26px;color:#a9b7c6;font-family:'Liberation Mono',monospace;"> String </div><div class="t" style="left:719.30px;top:661.12px;font-size:16.66px;line-height:26px;color:#ffc66d;font-family:'Liberation Mono',monospace;">hello</div><div class="t" style="left:769.30px;top:661.12px;font-size:16.66px;line-height:26px;color:#a9b7c6;font-family:'Liberation Mono',monospace;">()</div><div class="r" style="left:789.3px;top:660.25px;width:30px;height:25.25px;background:#3a3a3a"></div><div class="t" style="left:789.30px;top:661.12px;font-size:16.66px;line-height:26px;color:#8c9097;font-family:'Liberation Mono',monospace;"> { </div><div class="t" style="left:819.30px;top:661.12px;font-size:16.66px;line-height:26px;color:#cc7832;font-family:'Liberation Mono',monospace;">return</div><div class="t" style="left:889.30px;top:661.12px;font-size:16.66px;line-height:26px;color:#6a8759;font-family:'Liberation Mono',monospace;">"Hello from RESTEasy Reactive"</div><div class="t" style="left:1189.30px;top:661.12px;font-size:16.66px;line-height:26px;color:#cc7832;font-family:'Liberation Mono',monospace;">;</div><div class="r" style="left:1199.3px;top:660.25px;width:20px;height:25.25px;background:#3a3a3a"></div><div class="t" style="left:1199.30px;top:661.12px;font-size:16.66px;line-height:26px;color:#8c9097;font-family:'Liberation Mono',monospace;"> }</div><div class="t" style="left:465.80px;top:687.37px;font-size:16.66px;line-height:26px;color:#606366;font-family:'Liberation Mono',monospace;">25</div><div class="t" style="left:539.30px;top:687.37px;font-size:16.66px;line-height:26px;color:#a9b7c6;font-family:'Liberation Mono',monospace;">}</div><svg class="r" style="left:523px;top:168.5px;" width="15" height="16" viewBox="0 0 15 16"><path d="M1.5 0.5 H12.5 V9 L7 14.2 L1.5 9 Z" fill="#313335" stroke="#6b6b6b" stroke-width="1"/><path d="M4.5 5 H9.5" stroke="#6b6b6b" stroke-width="1"/></svg><svg class="r" style="left:523px;top:322.3px;" width="15" height="16" viewBox="0 0 15 16"><path d="M1.5 14.7 H12.5 V5.7 L7 0.5 L1.5 5.7 Z" fill="#313335" stroke="#6b6b6b" stroke-width="1"/><path d="M4.5 9.7 H9.5" stroke="#6b6b6b" stroke-width="1"/></svg><svg class="r" style="left:523px;top:614.75px;" width="15" height="16" viewBox="0 0 15 16"><path d="M1.5 0.5 H12.5 V9 L7 14.2 L1.5 9 Z" fill="#313335" stroke="#6b6b6b" stroke-width="1"/><path d="M4.5 5 H9.5" stroke="#6b6b6b" stroke-width="1"/></svg><svg class="r" style="left:523px;top:637.3px;" width="15" height="16" viewBox="0 0 15 16"><path d="M1.5 14.7 H12.5 V5.7 L7 0.5 L1.5 5.7 Z" fill="#313335" stroke="#6b6b6b" stroke-width="1"/><path d="M4.5 9.7 H9.5" stroke="#6b6b6b" stroke-width="1"/></svg><svg class="r" style="left:524px;top:667.75px;" width="13" height="13" viewBox="0 0 13 13"><rect x="0.5" y="0.5" width="11" height="11" fill="#313335" stroke="#6b6b6b" stroke-width="1"/><path d="M3 6 H9 M6 3 V9" stroke="#6b6b6b" stroke-width="1"/></svg><svg class="r" style="left:548px;top:553px;" width="16" height="20" viewBox="0 0 16 20"><circle cx="7.5" cy="7" r="6.6" fill="#d6a62f"/><rect x="4.3" y="10" width="6.4" height="3.5" fill="#d6a62f"/><rect x="4" y="14.8" width="7" height="1.6" fill="#c9c9c9"/><rect x="5" y="17.2" width="5" height="1.5" fill="#9a9a9a"/></svg><svg class="r" style="left:1584px;top:117px;" width="16" height="15" viewBox="0 0 16 15"><path d="M7.5 0.5 L14.8 14 H0.2 Z" fill="#d6a02b"/><rect x="6.6" y="4.5" width="1.9" height="5" fill="#2b2b2b"/><rect x="6.6" y="10.8" width="1.9" height="1.9" fill="#2b2b2b"/></svg><div class="t" style="left:1603.00px;top:115.97px;font-size:14.5px;line-height:20px;color:#a0b0c4;">3</div><svg class="r" style="left:1620px;top:118px;" width="17" height="17" viewBox="0 0 17 17"><path d="M1 6.5 L5.5 10.5 L15 1.5" stroke="#59a869" stroke-width="3" fill="none"/><path d="M1.5 15 L4 12.8 L6.5 15 L9 12.8 L11.5 15 L14 12.8" stroke="#59a869" stroke-width="1.2" fill="none"/></svg><div class="t" style="left:1641.00px;top:115.97px;font-size:14.5px;line-height:20px;color:#a0b0c4;">1</div><svg class="r" style="left:1660px;top:121px;" width="12" height="8" viewBox="0 0 12 8"><path d="M1 7 L6 2 L11 7" stroke="#afb1b3" stroke-width="1.4" fill="none"/></svg><svg class="r" style="left:1686px;top:121px;" width="12" height="8" viewBox="0 0 12 8"><path d="M1 1 L6 6 L11 1" stroke="#afb1b3" stroke-width="1.4" fill="none"/></svg><div class="r" style="left:1690px;top:508px;width:17px;height:3px;background:#d6a02b;"></div><div class="r" style="left:1690px;top:587px;width:17px;height:2px;background:#1f7a5f;"></div><svg class="r" style="left:1104px;top:859px;" width="9" height="18" viewBox="0 0 9 18"><path d="M0.8 1.3 H3.6 M5.2 1.3 H8 M0.8 16.6 H3.6 M5.2 16.6 H8" stroke="#e6e6e6" stroke-width="1.2"/><path d="M4.4 1.8 V16.1" stroke="#e6e6e6" stroke-width="1.1"/></svg><div class="r" style="left:1707px;top:74px;width:1px;height:835px;background:#323232;"></div><div class="r" style="left:1708px;top:74px;width:26px;height:835px;background:#3c3f41;"></div><div class="t" style="left:1712px;top:84px;font-size:20px;line-height:18px;font-weight:bold;font-style:italic;color:#b9b9b9;letter-spacing:-1px">m</div><div class="t" style="left:1730px;top:107px;font-size:12.76px;line-height:20px;color:#bbbbbb;transform-origin:0 0;transform:rotate(90deg);">Maven</div><div class="r" style="left:2px;top:909px;width:1732px;height:1px;background:#323232;"></div><svg class="r" style="left:43px;top:919px;" width="14" height="13" viewBox="0 0 14 13"><rect x="0" y="0.5" width="2.5" height="2.5" fill="#afb1b3"/><rect x="0" y="5" width="2.5" height="2.5" fill="#afb1b3"/><rect x="0" y="9.5" width="2.5" height="2.5" fill="#afb1b3"/><rect x="4" y="0.5" width="10" height="2.5" fill="#afb1b3"/><rect x="4" y="5" width="10" height="2.5" fill="#afb1b3"/><rect x="4" y="9.5" width="10" height="2.5" fill="#afb1b3"/></svg><div class="t" style="left:62.00px;top:917.63px;font-size:12.6px;line-height:20px;color:#bbbbbb;letter-spacing:-0.254px;">TODO</div><svg class="r" style="left:124px;top:918px;" width="15" height="15" viewBox="0 0 15 15"><circle cx="7.5" cy="7.5" r="7" fill="#afb1b3"/><rect x="6.3" y="3" width="2.4" height="6" fill="#3c3f41"/><rect x="6.3" y="10.3" width="2.4" height="2.2" fill="#3c3f41"/></svg><div class="t" style="left:144.90px;top:917.42px;font-size:13.2px;line-height:20px;color:#bbbbbb;letter-spacing:-0.153px;">Problems</div><svg class="r" style="left:227px;top:918px;" width="14" height="13" viewBox="0 0 14 13"><rect x="0" y="0" width="14" height="13" fill="#afb1b3"/><path d="M2.5 2.5 L6 5 L2.5 7.5" stroke="#3c3f41" stroke-width="1.3" fill="none"/><path d="M6.5 9.5 H11.5" stroke="#3c3f41" stroke-width="1.3"/></svg><div class="t" style="left:247.10px;top:917.42px;font-size:13.2px;line-height:20px;color:#bbbbbb;letter-spacing:-0.042px;">Terminal</div><svg class="r" style="left:1616px;top:917px;" width="17" height="17" viewBox="0 0 17 17"><path d="M16 8.5 V16.2 H8.5 A7.9 7.9 0 1 1 16 8.5 Z" fill="#cd5a40"/></svg><div class="t" style="left:1620.5px;top:916px;font-size:12px;line-height:18px;font-weight:bold;color:#ffffff">2</div><div class="t" style="left:1637.40px;top:917.53px;font-size:12.9px;line-height:20px;color:#bbbbbb;letter-spacing:-0.239px;">Event Log</div><div class="r" style="left:2px;top:937px;width:1732px;height:1px;background:#4b4d4f;"></div><svg class="r" style="left:9px;top:943px;" width="17" height="16" viewBox="0 0 17 16"><rect x="3.7" y="0.9" width="11.4" height="11.2" fill="none" stroke="#b4b6b4" stroke-width="1.3"/><path d="M1.1 3 V14.4 H12.8" stroke="#a8aaa8" stroke-width="1.3" fill="none"/></svg><svg class="r" style="left:31px;top:943px;" width="18" height="17" viewBox="0 0 18 17"><circle cx="8.8" cy="7.9" r="7.2" fill="none" stroke="#46494b" stroke-width="1.2"/><path d="M1.8 9.5 A7.2 7.2 0 0 1 8.8 0.7" stroke="#b8bab8" stroke-width="1.3" fill="none"/><path d="M15.8 6.3 A7.2 7.2 0 0 1 8.8 15.1" stroke="#b8bab8" stroke-width="1.3" fill="none"/></svg><div class="t" style="left:56.20px;top:940.97px;font-size:14.5px;line-height:20px;color:#bbbbbb;letter-spacing:0.067px;">Field 'remoteService' is never used. The Rest Client object should have the @RestClient annotation to be injected as a CDI bean.</div><div class="t" style="left:1472.00px;top:940.78px;font-size:13.6px;line-height:20px;color:#bbbbbb;letter-spacing:-0.167px;">18:23</div><div class="t" style="left:1521.50px;top:941.48px;font-size:11.6px;line-height:20px;color:#bbbbbb;letter-spacing:-0.414px;">LF</div><div class="t" style="left:1550.30px;top:940.78px;font-size:13.6px;line-height:20px;color:#bbbbbb;letter-spacing:0.036px;">UTF-8</div><div class="t" style="left:1602.80px;top:940.78px;font-size:13.6px;line-height:20px;color:#bbbbbb;letter-spacing:0.190px;">4 spaces</div><svg class="r" style="left:1672px;top:943px;" width="16" height="15" viewBox="0 0 16 15"><path d="M2 6 V4 A3.5 3.5 0 0 1 9 4 V5" stroke="#afb1b3" stroke-width="1.6" fill="none"/><rect x="5" y="7" width="10.5" height="8" fill="#afb1b3"/></svg><svg class="r" style="left:1704px;top:943px;" width="16" height="16" viewBox="0 0 16 16"><circle cx="8" cy="8" r="7.8" fill="#5a5d5f"/><rect x="6.8" y="3" width="2.4" height="6.5" fill="#3c3f41"/><rect x="6.8" y="10.8" width="2.4" height="2.3" fill="#3c3f41"/></svg>
</body></html>
